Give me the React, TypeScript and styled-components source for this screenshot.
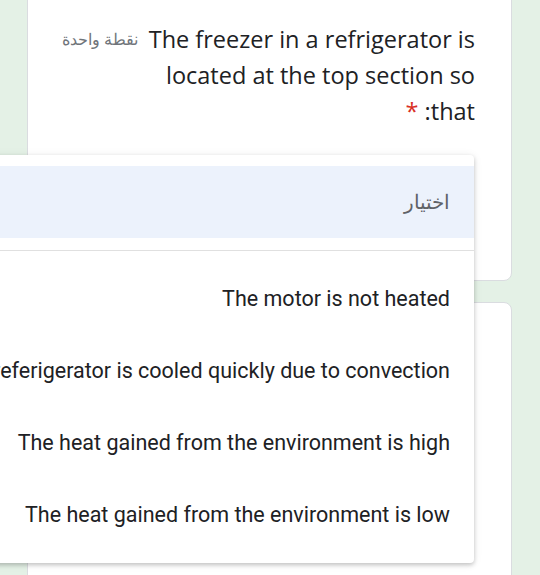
import styled, { createGlobalStyle } from "styled-components";

const options = [
  "The motor is not heated",
  "The referigerator is cooled quickly due to convection",
  "The heat gained from the environment is high",
  "The heat gained from the environment is low",
];

export default function App() {
  return (
    <>
      <GlobalStyle />
      <Page>
        <Card $first>
          <QuestionHeader>
            <Title>
              The freezer in a refrigerator is located at the top section so
              that: <Required>*</Required>
            </Title>
            <Points>نقطة واحدة</Points>
          </QuestionHeader>
        </Card>
        <Card />
        <Menu>
          <Placeholder>اختيار</Placeholder>
          <Divider />
          {options.map((text) => (
            <Option key={text}>{text}</Option>
          ))}
        </Menu>
      </Page>
    </>
  );
}

const GlobalStyle = createGlobalStyle`
  html, body {
    margin: 0;
    height: 100%;
    overflow: hidden;
    background: #e4f1e6;
  }
`;

const Page = styled.div`
  position: relative;
  direction: rtl;
  display: flex;
  flex-direction: column;
  gap: 21px;
  padding: 0 28px 0 27px;
  height: 575px;
  box-sizing: border-box;
`;

const Card = styled.div<{ $first?: boolean }>`
  flex-shrink: 0;
  background: #ffffff;
  border: 1px solid #dadce0;
  border-radius: 8px;
  box-sizing: border-box;
  margin-top: ${(p) => (p.$first ? "-20px" : "0")};
  height: ${(p) => (p.$first ? "301px" : "300px")};
  padding: 40px 36px 0 34px;
`;

const QuestionHeader = styled.div`
  display: flex;
  align-items: flex-start;
  gap: 10px;
`;

const Title = styled.div`
  flex: 1;
  font-family: "Open Sans", sans-serif;
  font-size: 23.5px;
  line-height: 36px;
  color: #202124;
  text-align: right;
`;

const Required = styled.span`
  color: #d93025;
`;

const Points = styled.div`
  font-family: "Noto Sans", sans-serif;
  font-size: 16px;
  line-height: 36px;
  color: #70757a;
  white-space: nowrap;
`;

const Menu = styled.div`
  position: absolute;
  top: 155px;
  right: 66px;
  width: 560px;
  background: #ffffff;
  border-radius: 4px;
  box-shadow: 0 2px 4px rgba(0, 0, 0, 0.2), 0 1px 10px rgba(0, 0, 0, 0.08);
  padding: 11px 0 13px;
  font-family: Roboto, sans-serif;
`;

const Placeholder = styled.div`
  background: #ecf2fc;
  height: 72px;
  display: flex;
  align-items: center;
  padding: 0 24px;
  font-size: 20px;
  color: #5f6368;
`;

const Divider = styled.div`
  height: 1px;
  background: #e0e0e0;
  margin: 12px 0 11px;
`;

const Option = styled.div`
  height: 72px;
  display: flex;
  align-items: center;
  padding: 0 24px;
  font-size: 21.5px;
  color: #202124;
  white-space: nowrap;
`;
